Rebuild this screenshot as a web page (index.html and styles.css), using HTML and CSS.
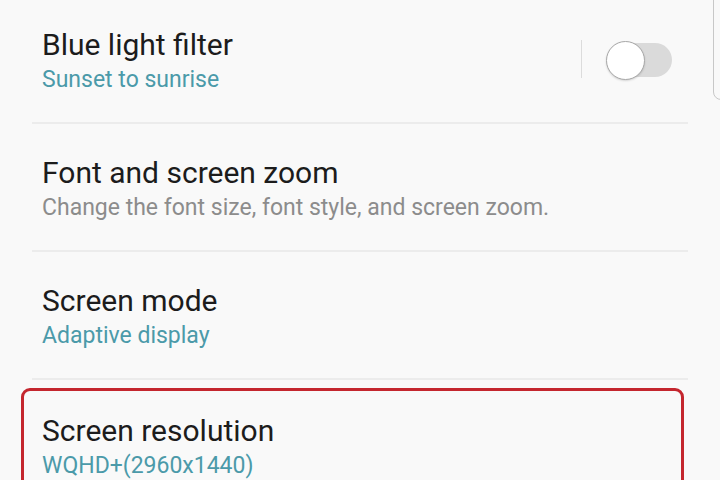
FILE: index.html
```html
<!DOCTYPE html>
<html lang="en">
<head>
  <meta charset="UTF-8" />
  <title>Display</title>
  <link rel="stylesheet" href="styles.css">
</head>
<body>
  <div class="edge-panel"></div>

  <div class="list">
    <div class="row">
      <div class="text">
        <div class="title">Blue light filter</div>
        <div class="sub accent">Sunset to sunrise</div>
      </div>
      <div class="sep"></div>
      <div class="switch"><div class="knob"></div></div>
    </div>

    <div class="row">
      <div class="text">
        <div class="title">Font and screen zoom</div>
        <div class="sub">Change the font size, font style, and screen zoom.</div>
      </div>
    </div>

    <div class="row">
      <div class="text">
        <div class="title">Screen mode</div>
        <div class="sub accent">Adaptive display</div>
      </div>
    </div>

    <div class="row last">
      <div class="highlight">
        <div class="text">
          <div class="title">Screen resolution</div>
          <div class="sub accent">WQHD+(2960x1440)</div>
        </div>
      </div>
    </div>
  </div>
</body>
</html>
```

FILE: styles.css
```css
* {
  box-sizing: border-box;
}

body {
  margin: 0;
  height: 480px;
  overflow: hidden;
  background-color: #f9f9f9;
  font-family: Roboto, "Noto Sans", sans-serif;
  color: #1c1c1c;
  position: relative;
}

.list {
  margin-top: -4px;
}

.row {
  height: 128px;
  margin: 0 32px;
  padding-top: 30px;
  border-bottom: 2px solid #ececec;
  display: flex;
  align-items: flex-start;
}

.row.last {
  border-bottom: none;
  margin: 0 36px 0 21px;
  padding-top: 8px;
}

.text {
  flex: 1;
  padding-left: 10px;
}

.title {
  font-size: 30px;
  line-height: 38px;
}

.sub {
  font-size: 23px;
  line-height: 32px;
  color: #8c8c8c;
}

.sub.accent {
  color: #4b9aa9;
}

.sep {
  align-self: center;
  width: 1px;
  height: 38px;
  margin-top: -30px;
  background-color: #dcdcdc;
  margin-right: 26px;
}

.switch {
  align-self: center;
  position: relative;
  width: 64px;
  height: 34px;
  margin-top: -28px;
  border-radius: 17px;
  background-color: #dadada;
  margin-right: 16px;
}

.knob {
  position: absolute;
  left: -2px;
  top: -2px;
  width: 39px;
  height: 39px;
  border-radius: 50%;
  background-color: #fff;
  border: 1px solid #a8a8a8;
  box-shadow: 0 1px 2px rgba(0,0,0,0.15);
}

.highlight {
  flex: 1;
  height: 140px;
  border: 3px solid #c4262e;
  border-radius: 9px;
  padding-top: 21px;
  padding-left: 8px;
}

.edge-panel {
  position: absolute;
  left: 713px;
  top: -20px;
  width: 30px;
  height: 120px;
  border: 1px solid #c8c8c8;
  border-radius: 8px;
}
```
